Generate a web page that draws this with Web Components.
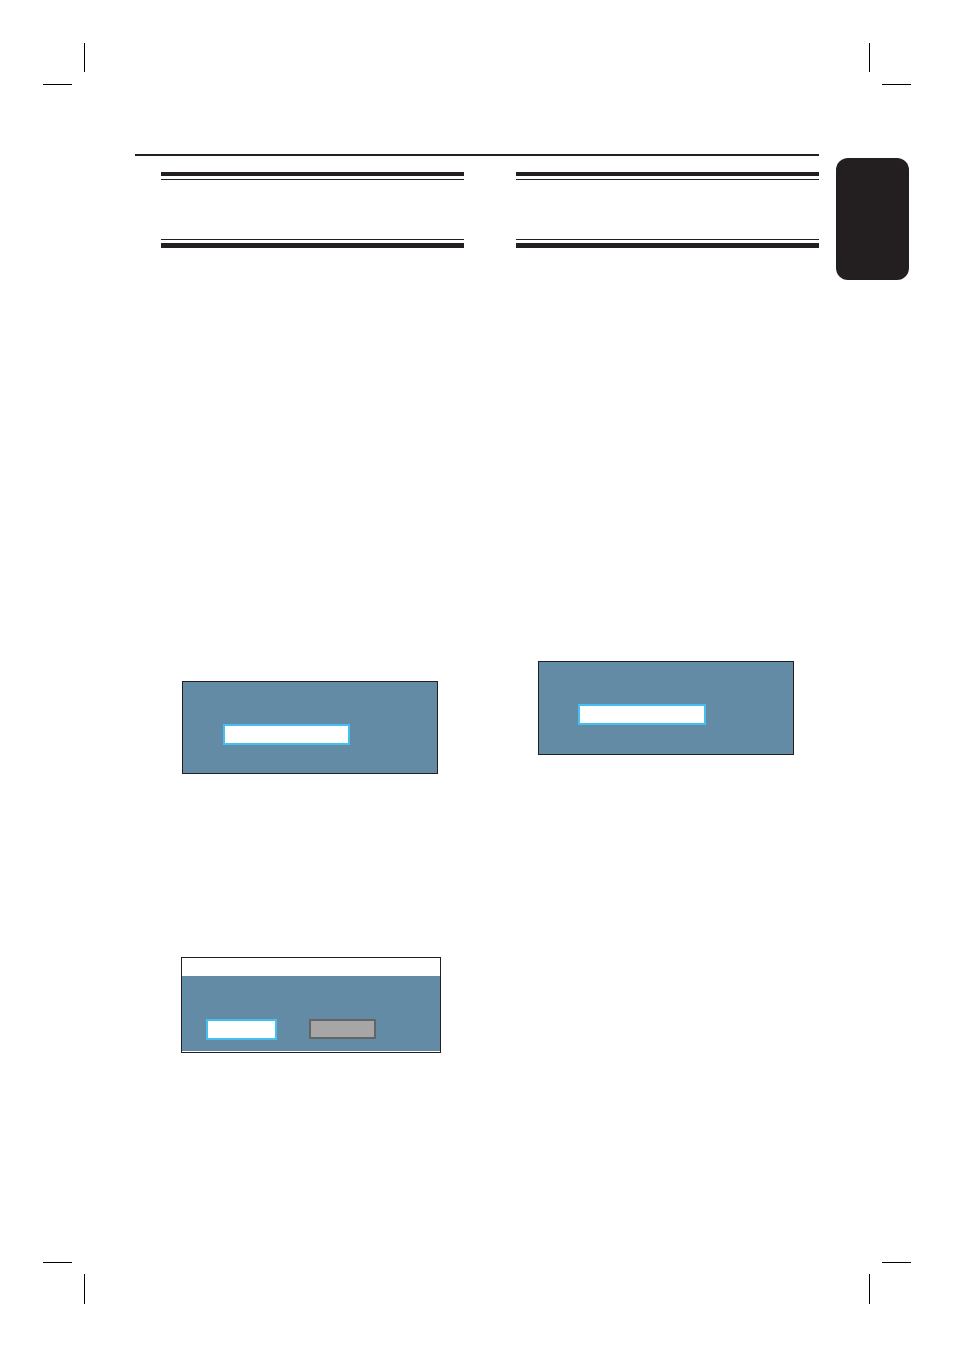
<!DOCTYPE html>
<html lang="en">
<head>
  <meta charset="utf-8" />
  <meta name="viewport" content="width=device-width, initial-scale=1" />
  <title>Manual page</title>
  <style>
    body {
      margin: 0;
      background: #fff;
      font-family: "Liberation Sans", Arial, sans-serif;

      --ink: #231f20;
      --panel: #648ba6;
      --focus: #45bfee;
    }
  </style>
</head>
<body>
  <manual-sheet>
    <manual-page>
      <page-column>
        <osd-panel style="--indent: 40px">
          <osd-field label="Selected item"></osd-field>
        </osd-panel>
        <osd-dialog>
          <osd-button label="Confirm"></osd-button>
          <osd-button label="Cancel" muted></osd-button>
        </osd-dialog>
      </page-column>
      <page-column class="second">
        <osd-panel class="second" style="--indent: 39px; --foot: 29px">
          <osd-field label="Selected item" style="--width: 128px"></osd-field>
        </osd-panel>
      </page-column>
      <language-tab slot="tab"></language-tab>
    </manual-page>
  </manual-sheet>

  <script>
    // one corner of the trim marks, mirrored for the right and bottom sides
    class CropMark extends HTMLElement {
      constructor() {
        super();
        this.attachShadow({ mode: 'open' });

        this.shadowRoot.innerHTML = `
          <style>
            :host {
              display: grid;
              grid-template: 29px 12px 1px / 29px 12px 1px;
            }

            :host([side="right"]) {
              grid-template-columns: 1px 12px 29px;
            }

            :host([edge="bottom"]) {
              grid-template-rows: 1px 11px 30px;
            }

            i {
              background: #000;
            }

            .across {
              grid-area: 3 / 1;
            }

            .down {
              grid-area: 1 / 3;
            }

            :host([side="right"]) .across {
              grid-column: 3;
            }

            :host([side="right"]) .down {
              grid-column: 1;
            }

            :host([edge="bottom"]) .across {
              grid-row: 1;
            }

            :host([edge="bottom"]) .down {
              grid-row: 3;
            }
          </style>
          <i class="across"></i>
          <i class="down"></i>
        `;
      }
    }

    class ManualSheet extends HTMLElement {
      constructor() {
        super();
        this.attachShadow({ mode: 'open' });

        this.shadowRoot.innerHTML = `
          <style>
            :host {
              display: flex;
              flex-direction: column;
              box-sizing: border-box;
              min-height: 100vh;
              padding: 43px;
            }

            .marks {
              display: flex;
              justify-content: space-between;
            }

            main {
              flex: 1;
            }
          </style>
          <div class="marks">
            <crop-mark></crop-mark>
            <crop-mark side="right"></crop-mark>
          </div>
          <main><slot></slot></main>
          <div class="marks">
            <crop-mark edge="bottom"></crop-mark>
            <crop-mark side="right" edge="bottom"></crop-mark>
          </div>
        `;
      }
    }

    class ManualPage extends HTMLElement {
      constructor() {
        super();
        this.attachShadow({ mode: 'open' });

        this.shadowRoot.innerHTML = `
          <style>
            :host {
              display: grid;
              grid-template-columns: 1fr 73px;
              column-gap: 17px;
              padding: 69px 2px 0 92px;
            }

            article {
              border-top: 2px solid var(--ink);
            }

            .columns {
              display: grid;
              grid-template-columns: 1fr 1fr;
              column-gap: 52px;
              padding: 16px 0 0 26px;
            }
          </style>
          <article>
            <div class="columns"><slot></slot></div>
          </article>
          <aside><slot name="tab"></slot></aside>
        `;
      }
    }

    class LanguageTab extends HTMLElement {
      constructor() {
        super();
        this.attachShadow({ mode: 'open' });

        this.shadowRoot.innerHTML = `
          <style>
            :host {
              display: block;
              height: 122px;
              margin-top: 4px;
              border-radius: 12px;
              background: var(--ink);
            }
          </style>
        `;
      }
    }

    class PageColumn extends HTMLElement {
      constructor() {
        super();
        this.attachShadow({ mode: 'open' });

        this.shadowRoot.innerHTML = `
          <style>
            :host {
              display: block;
            }

            header {
              padding: 3px 0;
              border-top: 4px solid var(--ink);
              border-bottom: 5px solid var(--ink);
            }

            .title {
              height: 59px;
              border-top: 1px solid var(--ink);
              border-bottom: 1px solid var(--ink);
            }

            .body {
              display: flex;
              flex-direction: column;
              align-items: flex-start;
              gap: 183px;
              padding: 433px 0 0 20px;
            }

            :host(.second) .body {
              padding-top: 413px;
            }
          </style>
          <header><div class="title"></div></header>
          <div class="body"><slot></slot></div>
        `;
      }
    }

    class OsdPanel extends HTMLElement {
      constructor() {
        super();
        this.attachShadow({ mode: 'open' });

        this.shadowRoot.innerHTML = `
          <style>
            :host {
              display: flex;
              box-sizing: border-box;
              width: 256px;
              max-width: 100%;
              margin-left: 1px;
              padding: 42px 0 var(--foot, 28px) var(--indent);
              border: 1px solid var(--ink);
              background: var(--panel);
            }

            :host(.second) {
              margin-left: 2px;
            }
          </style>
          <slot></slot>
        `;
      }
    }

    class OsdDialog extends HTMLElement {
      constructor() {
        super();
        this.attachShadow({ mode: 'open' });

        this.shadowRoot.innerHTML = `
          <style>
            :host {
              display: block;
              box-sizing: border-box;
              width: 260px;
              max-width: 100%;
              padding-bottom: 1px;
              border: 1px solid var(--ink);
              background: #fff;
            }

            .bar {
              height: 18px;
            }

            .actions {
              display: flex;
              align-items: flex-start;
              gap: 32px;
              padding: 43px 24px 11px;
              background: var(--panel);
            }
          </style>
          <div class="bar"></div>
          <div class="actions"><slot></slot></div>
        `;
      }
    }

    class OsdField extends HTMLElement {
      constructor() {
        super();
        this.attachShadow({ mode: 'open' });

        this.shadowRoot.innerHTML = `
          <style>
            :host {
              display: flex;
            }

            input {
              box-sizing: border-box;
              width: var(--width, 127px);
              height: 21px;
              margin: 0;
              padding: 0 4px;
              border: 2px solid var(--focus);
              border-radius: 0;
              background: #fff;
              font: inherit;
              font-size: 12px;
            }
          </style>
          <input type="text" aria-label="${this.getAttribute('label')}" />
        `;
      }
    }

    class OsdButton extends HTMLElement {
      constructor() {
        super();
        this.attachShadow({ mode: 'open' });

        this.shadowRoot.innerHTML = `
          <style>
            :host {
              display: flex;
            }

            button {
              box-sizing: border-box;
              width: 71px;
              height: 21px;
              margin: 0;
              padding: 0;
              border: 2px solid var(--focus);
              border-radius: 0;
              background: #fff;
            }

            :host([muted]) button {
              width: 67px;
              height: 20px;
              border-color: #636466;
              background: #a7a5a6;
            }
          </style>
          <button type="button" aria-label="${this.getAttribute('label')}"></button>
        `;
      }
    }

    customElements.define('crop-mark', CropMark);
    customElements.define('manual-sheet', ManualSheet);
    customElements.define('manual-page', ManualPage);
    customElements.define('language-tab', LanguageTab);
    customElements.define('page-column', PageColumn);
    customElements.define('osd-panel', OsdPanel);
    customElements.define('osd-dialog', OsdDialog);
    customElements.define('osd-field', OsdField);
    customElements.define('osd-button', OsdButton);
  </script>
</body>
</html>
